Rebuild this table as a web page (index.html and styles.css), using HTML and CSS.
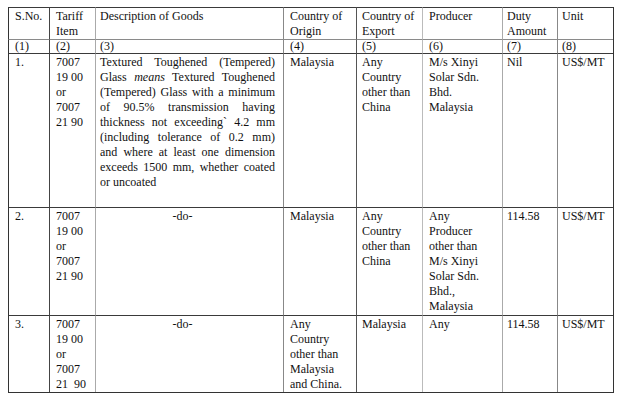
FILE: index.html
```html
<!DOCTYPE html>
<html>
<head>
<meta charset="utf-8">
<link rel="stylesheet" href="styles.css">
</head>
<body>
<div class="duty">
  <div class="cell hd c1">S.No.</div>
  <div class="cell hd c2">Tariff<br>Item</div>
  <div class="cell hd c3">Description of Goods</div>
  <div class="cell hd c4">Country of<br>Origin</div>
  <div class="cell hd c5">Country of<br>Export</div>
  <div class="cell hd c6">Producer</div>
  <div class="cell hd c7">Duty<br>Amount</div>
  <div class="cell hd c8">Unit</div>

  <div class="cell num c1">(1)</div>
  <div class="cell num c2">(2)</div>
  <div class="cell num c3">(3)</div>
  <div class="cell num c4">(4)</div>
  <div class="cell num c5">(5)</div>
  <div class="cell num c6">(6)</div>
  <div class="cell num c7">(7)</div>
  <div class="cell num c8">(8)</div>

  <div class="cell row c1">1.</div>
  <div class="cell row c2">7007<br>19 00<br>or<br>7007<br>21 90</div>
  <div class="cell row c3 desc">
    <span class="jl">Textured Toughened (Tempered)</span>
    <span class="jl">Glass <em>means</em> Textured Toughened</span>
    <span class="jl">(Tempered) Glass with a minimum</span>
    <span class="jl">of 90.5% transmission having</span>
    <span class="jl">thickness not exceeding` 4.2 mm</span>
    <span class="jl">(including tolerance of 0.2 mm)</span>
    <span class="jl">and where at least one dimension</span>
    <span class="jl">exceeds 1500 mm, whether coated</span>
    <span class="ll">or uncoated</span>
  </div>
  <div class="cell row c4">Malaysia</div>
  <div class="cell row c5">Any<br>Country<br>other than<br>China</div>
  <div class="cell row c6">M/s Xinyi<br>Solar Sdn.<br>Bhd.<br>Malaysia</div>
  <div class="cell row c7">Nil</div>
  <div class="cell row c8">US$/MT</div>

  <div class="cell row c1">2.</div>
  <div class="cell row c2">7007<br>19 00<br>or<br>7007<br>21 90</div>
  <div class="cell row c3 ditto">-do-</div>
  <div class="cell row c4">Malaysia</div>
  <div class="cell row c5">Any<br>Country<br>other than<br>China</div>
  <div class="cell row c6">Any<br>Producer<br>other than<br>M/s Xinyi<br>Solar Sdn.<br>Bhd.,<br>Malaysia</div>
  <div class="cell row c7">114.58</div>
  <div class="cell row c8">US$/MT</div>

  <div class="cell row c1">3.</div>
  <div class="cell row c2">7007<br>19 00<br>or<br>7007<br>21&nbsp;&nbsp;90</div>
  <div class="cell row c3 ditto">-do-</div>
  <div class="cell row c4">Any<br>Country<br>other than<br>Malaysia<br>and China.</div>
  <div class="cell row c5">Malaysia</div>
  <div class="cell row c6">Any</div>
  <div class="cell row c7">114.58</div>
  <div class="cell row c8">US$/MT</div>
</div>
</body>
</html>
```

FILE: styles.css
```css
html, body {
  margin: 0;
  padding: 0;
  background: #ffffff;
}

body {
  font-family: "Liberation Serif", "Times New Roman", serif;
  font-size: 12px;
  line-height: 15px;
  color: #111111;
}

.duty {
  display: grid;
  grid-template-columns: 41px 46px 188px 73px 66px 80px 55px 56px;
  grid-template-rows: 32px 14px 154px 108px 77px;
  width: 606px;
  margin: 7px 0 0 8px;
  border-right: 1px solid #333;
  border-bottom: 1px solid #333;
  box-sizing: border-box;
}

.cell {
  box-sizing: border-box;
  border-left: 1px solid #444;
  border-top: 1px solid #3a3a3a;
  padding: 1px 2px 0 6px;
  white-space: nowrap;
  overflow: hidden;
}

.num {
  line-height: 13px;
  padding-top: 0;
  border-top-color: #8a8a8a;
}

.c1 { border-left-color: #333; padding-left: 6px; }
.c2 { border-left-color: #444; padding-left: 6px; }
.c3 { border-left-color: #aaaaaa; padding-left: 4px; padding-right: 8px; }
.c4 { border-left-color: #888888; padding-left: 6px; }
.c5 { border-left-color: #555555; padding-left: 5px; }
.c6 { border-left-color: #bbbbbb; padding-left: 6px; }
.c7 { border-left-color: #aaaaaa; padding-left: 4px; }
.c8 { border-left-color: #888888; padding-left: 4px; }

.desc {
  white-space: normal;
}

.desc em {
  font-style: italic;
}

.jl {
  display: block;
  white-space: nowrap;
  text-align: justify;
  text-align-last: justify;
}

.ll {
  display: block;
  text-align: left;
}

.ditto {
  text-align: center;
  padding-right: 18px;
}
```
